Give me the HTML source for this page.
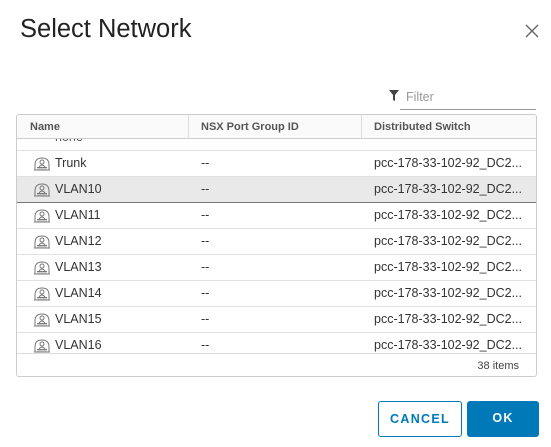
<!DOCTYPE html>
<html><head><style>
*{margin:0;padding:0;box-sizing:border-box}
body{width:551px;height:447px;background:#fff;font-family:"Liberation Sans",sans-serif;color:#313131;position:relative;overflow:hidden}
.t{position:absolute;left:20px;top:15px;font-size:25.5px;color:#222}
.x{position:absolute;left:524px;top:23px}
.f{position:absolute;left:400px;top:86px;width:136px;height:24px;border-bottom:1px solid #9a9a9a;font-size:12.5px;color:#999;padding-left:6px;line-height:22px}
.fi{position:absolute;left:389px;top:90px}
.tb{position:absolute;left:16px;top:114px;width:521px;height:263px;border:1px solid #ccc;border-radius:3px;overflow:hidden}
.h{position:absolute;top:0;left:0;right:0;height:24px;background:#fafafa;border-bottom:1px solid #ccc;font-size:11px;font-weight:bold;color:#555;line-height:24px;z-index:2}
.c{position:absolute;white-space:nowrap}
.s{position:absolute;top:0;height:24px;width:1px;background:#ddd}
.r{position:absolute;left:0;right:0;height:26px;border-bottom:1px solid #e0e0e0;font-size:12.5px;line-height:25px;color:#333}
.sel{background:#e9e9e9;border-bottom:1px solid #777}
.ic{position:absolute;left:16px;top:5px}
.ft{position:absolute;left:0;right:0;top:238px;height:25px;border-top:1px solid #ddd;font-size:11px;text-align:right;padding-right:17px;line-height:24px;color:#444;background:#fff;z-index:2}
.b{position:absolute;top:401px;height:36px;font-size:12.5px;font-weight:bold;letter-spacing:1.3px;text-align:center;line-height:34px;border-radius:3px}
</style></head><body>
<div class="t">Select Network</div>
<svg class="x" width="16" height="16"><path d="M2 2L14 14M14 2L2 14" stroke="#666" stroke-width="1.4"/></svg>
<svg class="fi" width="10" height="11"><path d="M0 0H10L6 5V11L4 10V5Z" fill="#444"/></svg>
<div class="f">Filter</div>
<div class="tb">
<div class="h"><span class="c" style="left:13px">Name</span><div class="s" style="left:171px"></div><span class="c" style="left:184px">NSX Port Group ID</span><div class="s" style="left:344px"></div><span class="c" style="left:357px">Distributed Switch</span></div>
<div class="r" style="top:10px;height:26px"><span class="c" style="left:38px;top:0;color:#555">none</span></div>
<div id="rows"></div>
<div class="ft">38 items</div>
</div>
<div class="b" style="left:378px;width:84px;border:1px solid #0079b8;color:#0079b8">CANCEL</div>
<div class="b" style="left:467px;width:72px;background:#0079b8;color:#fff">OK</div>
<script>
var n=["Trunk","VLAN10","VLAN11","VLAN12","VLAN13","VLAN14","VLAN15","VLAN16"],h="";
var ic='<svg class="ic" width="18" height="15" viewBox="0 0 18 15"><path d="M2 14V9Q2 2 9 2Q16 2 16 9V14Z" fill="none" stroke="#777"/><circle cx="9" cy="6" r="2" fill="none" stroke="#777"/><path d="M6 11Q9 7 12 11" fill="none" stroke="#777"/><path d="M1 14H17M4 11.5H14" stroke="#777"/><path d="M5 11.5V14M7 11.5V14M9 11.5V14M11 11.5V14M13 11.5V14" stroke="#777" stroke-width=".7"/></svg>';
for(var i=0;i<n.length;i++){h+='<div class="r'+(i==1?' sel':'')+'" style="top:'+(36+i*26)+'px">'+ic+'<span class="c" style="left:38px">'+n[i]+'</span><span class="c" style="left:184px">--</span><span class="c" style="left:357px">pcc-178-33-102-92_DC2...</span></div>';}
document.getElementById('rows').outerHTML=h;
</script>
</body></html>
